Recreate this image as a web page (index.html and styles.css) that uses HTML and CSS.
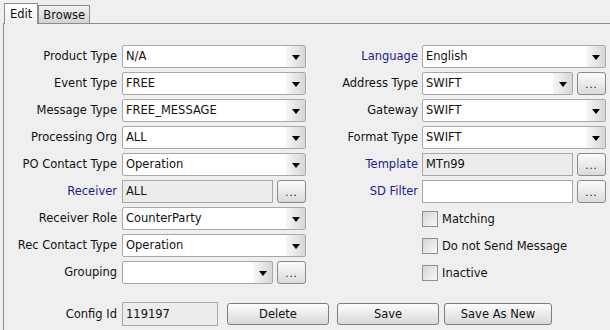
FILE: index.html
```html
<!DOCTYPE html>
<html lang="en">

<head>
    <meta charset="UTF-8">
    <title>Message Config</title>
    <link rel="stylesheet" href="styles.css">
</head>

<body>
    <div class="tabs">
        <div class="tab active">Edit</div>
        <div class="tab">Browse</div>
    </div>

    <div class="panel">
        <div class="form">
            <div class="label">Product Type</div>
            <div class="combo"><span>N/A</span><i class="arrow"></i></div>
            <div class="label link">Language</div>
            <div class="combo"><span>English</span><i class="arrow"></i></div>

            <div class="label">Event Type</div>
            <div class="combo"><span>FREE</span><i class="arrow"></i></div>
            <div class="label">Address Type</div>
            <div class="with-btn">
                <div class="combo"><span>SWIFT</span><i class="arrow"></i></div>
                <div class="dots">...</div>
            </div>

            <div class="label">Message Type</div>
            <div class="combo"><span>FREE_MESSAGE</span><i class="arrow"></i></div>
            <div class="label">Gateway</div>
            <div class="combo"><span>SWIFT</span><i class="arrow"></i></div>

            <div class="label">Processing Org</div>
            <div class="combo"><span>ALL</span><i class="arrow"></i></div>
            <div class="label">Format Type</div>
            <div class="combo"><span>SWIFT</span><i class="arrow"></i></div>

            <div class="label">PO Contact Type</div>
            <div class="combo"><span>Operation</span><i class="arrow"></i></div>
            <div class="label link">Template</div>
            <div class="with-btn">
                <div class="field readonly">MTn99</div>
                <div class="dots">...</div>
            </div>

            <div class="label link">Receiver</div>
            <div class="with-btn">
                <div class="field readonly">ALL</div>
                <div class="dots">...</div>
            </div>
            <div class="label link">SD Filter</div>
            <div class="with-btn">
                <div class="field"></div>
                <div class="dots">...</div>
            </div>

            <div class="label">Receiver Role</div>
            <div class="combo"><span>CounterParty</span><i class="arrow"></i></div>
            <div class="label"></div>
            <div class="check"><i class="box"></i>Matching</div>

            <div class="label">Rec Contact Type</div>
            <div class="combo"><span>Operation</span><i class="arrow"></i></div>
            <div class="label"></div>
            <div class="check"><i class="box"></i>Do not Send Message</div>

            <div class="label">Grouping</div>
            <div class="with-btn">
                <div class="combo"><span></span><i class="arrow"></i></div>
                <div class="dots">...</div>
            </div>
            <div class="label"></div>
            <div class="check"><i class="box"></i>Inactive</div>
        </div>

        <div class="footer">
            <div class="label">Config Id</div>
            <div class="field readonly config">119197</div>
            <div class="button delete">Delete</div>
            <div class="button">Save</div>
            <div class="button wide">Save As New</div>
        </div>
    </div>
</body>

</html>
```

FILE: styles.css
```css
body {
    margin: 0;
    background-color: #efefef;
    font-family: "DejaVu Sans", Verdana, sans-serif;
    font-size: 11.5px;
    color: #111;
    overflow: hidden;
}

.tabs {
    display: flex;
    align-items: flex-end;
    height: 23px;
    padding-left: 4px;
}

.tab {
    height: 17px;
    padding: 0 4px;
    border: 1px solid #8c8c8c;
    border-bottom: none;
    background: linear-gradient(#f2f2f2, #d2d2d2);
    line-height: 18px;
}

.tab.active {
    height: 20px;
    padding: 0 5px;
    background: linear-gradient(#ffffff, #efefef);
    line-height: 20px;
    position: relative;
    z-index: 1;
    margin-bottom: -1px;
}

.panel {
    box-sizing: border-box;
    height: 307px;
    margin-left: 3px;
    border-left: 1px solid #8c8c8c;
    border-top: 1px solid #8c8c8c;
    padding-top: 21px;
}

.form {
    display: grid;
    grid-template-columns: 118px 184px 116px 184px;
    grid-auto-rows: 23px;
    row-gap: 4px;
}

.label {
    text-align: right;
    padding-right: 5px;
    line-height: 23px;
    white-space: nowrap;
}

.form .label:nth-child(4n+3) {
    padding-right: 4px;
}

.link {
    color: #1c1c8e;
}

.combo {
    display: flex;
    background-color: #fff;
    border: 1px solid #a8a8a8;
    border-radius: 2px;
    line-height: 21px;
}

.combo span {
    flex: 1;
    padding-left: 3px;
    white-space: nowrap;
}

.arrow {
    width: 19px;
    background: linear-gradient(to right, #f7f7f7, #d6d6d6);
    position: relative;
}

.arrow::after {
    content: "";
    position: absolute;
    left: 6px;
    top: 9px;
    border-left: 4px solid transparent;
    border-right: 4px solid transparent;
    border-top: 5px solid #000;
}

.with-btn {
    display: flex;
    gap: 4px;
}

.with-btn .combo,
.with-btn .field {
    flex: 1;
}

.field {
    background-color: #fff;
    border: 1px solid #a8a8a8;
    padding-left: 3px;
    line-height: 21px;
}

.readonly {
    background-color: #ececec;
}

.dots {
    width: 27px;
    height: 21px;
    border: 1px solid #8a8a8a;
    border-radius: 3px;
    background: linear-gradient(#fbfbfb, #dadada);
    text-align: center;
    line-height: 24px;
    font-size: 10px;
    letter-spacing: 1px;
}

.check {
    display: flex;
    align-items: center;
    gap: 4px;
    padding-top: 1px;
}

.box {
    width: 14px;
    height: 14px;
    border: 1px solid #8f8f8f;
    background: linear-gradient(135deg, #d6d6d6, #f8f8f8);
}

.footer {
    display: flex;
    align-items: center;
    margin-top: 18px;
    height: 24px;
}

.footer .label {
    width: 113px;
}

.config {
    width: 91px;
    height: 22px;
    line-height: 22px;
}

.button {
    width: 100px;
    height: 20px;
    margin-left: 8px;
    border: 1px solid #7e7e7e;
    border-radius: 3px;
    background: linear-gradient(#fdfdfd, #d8d8d8);
    text-align: center;
    line-height: 20px;
}

.delete {
    margin-left: 9px;
}

.wide {
    width: 106px;
    margin-left: 5px;
}
```
